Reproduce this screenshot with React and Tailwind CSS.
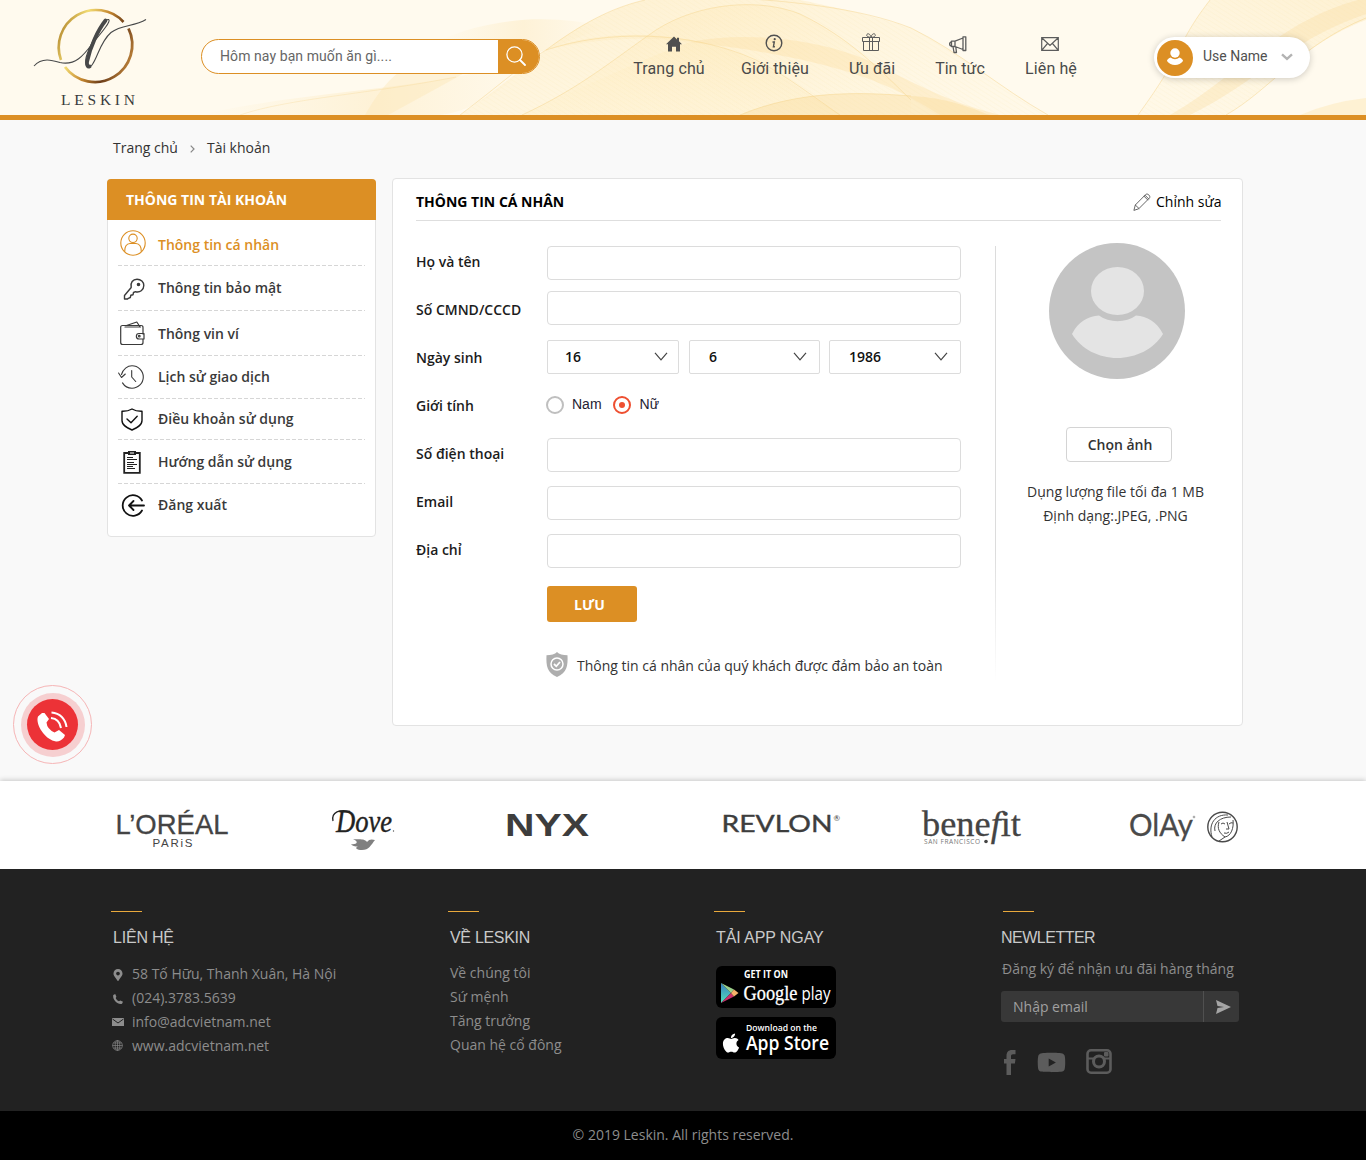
import React from "react";
import { FaApple, FaYoutube, FaPhoneAlt, FaMapMarkerAlt } from "react-icons/fa";

const line = { fill: "none", stroke: "currentColor", strokeLinecap: "round", strokeLinejoin: "round" };

function Waves() {
  return (
    <svg className="absolute inset-0" width="1366" height="115" viewBox="0 0 1366 115" fill="none" aria-hidden="true">
      <defs>
        <linearGradient id="wa" x1="0" y1="0" x2="1" y2="1">
          <stop offset="0" stopColor="#fde6b0" stopOpacity=".5" />
          <stop offset="1" stopColor="#fff6dd" stopOpacity=".3" />
        </linearGradient>
        <linearGradient id="wb" x1="0" y1="1" x2="1" y2="0">
          <stop offset="0" stopColor="#fff3d2" stopOpacity=".2" />
          <stop offset="1" stopColor="#fce3a8" stopOpacity=".4" />
        </linearGradient>
        <linearGradient id="wc" x1="0" y1="0" x2="1" y2="0">
          <stop offset="0" stopColor="#fce6b4" stopOpacity="0" />
          <stop offset=".5" stopColor="#fce6b4" stopOpacity=".4" />
          <stop offset="1" stopColor="#fce6b4" stopOpacity="0" />
        </linearGradient>
        <pattern id="wp" width="4" height="4" patternUnits="userSpaceOnUse" patternTransform="rotate(32)">
          <path d="M0 0H4" stroke="#f5d48c" strokeOpacity=".2" strokeWidth=".8" />
        </pattern>
      </defs>
      <path d="M200 115C280 96 370 92 456 77C490 70 520 62 546 50C510 84 480 110 440 115Z" fill="url(#wc)" />
      <path d="M365 115Q382 85 398 73L470 70Q425 95 388 115Z" fill="#fce6b4" fillOpacity=".4" />
      <path d="M440 40C500 14 560 16 606 27L546 50L470 74Z" fill="url(#wc)" />
      <path d="M460 115C500 88 520 70 546 50C575 28 610 8 645 0H800C850 10 880 18 911 28C960 52 1000 88 1048 115Z" fill="url(#wa)" />
      <path d="M522 115C580 88 610 62 656 30C700 2 760 -2 800 14C850 38 880 70 911 100V115Z" fill="url(#wa)" />
      <path d="M546 50C600 28 680 30 740 54C780 72 810 95 840 115H522C580 88 640 60 690 42C640 36 600 38 546 50Z" fill="url(#wb)" />
      <path d="M460 115C500 88 520 70 546 50C575 28 610 8 645 0H800C850 10 880 18 911 28C960 52 1000 88 1048 115Z" fill="url(#wp)" />
      <path d="M740 115C800 90 860 92 911 96C950 98 970 108 990 115Z" fill="#fbdc9a" fillOpacity=".4" />
      <path d="M690 42C750 30 830 40 880 66C930 92 960 105 1000 115H940C900 90 850 60 690 42Z" fill="#fbdb97" fillOpacity=".3" />
      <g stroke="#f6d58f" strokeOpacity=".5">
        <path d="M460 115C500 85 520 66 546 50C580 25 610 8 645 0" />
        <path d="M522 115C580 88 610 62 656 30C700 2 760 -2 800 14C850 38 880 70 911 100" />
        <path d="M700 -4C790 0 860 8 911 28C960 52 1000 88 1048 115" />
        <path d="M546 50C606 30 690 30 756 60C790 78 815 98 840 115" />
        <path d="M740 115C800 90 860 92 911 96" />
        <path d="M240 115C290 98 370 94 456 77" strokeOpacity=".3" />
      </g>
      <path d="M1138 115C1160 85 1175 60 1186 36C1196 18 1204 8 1210 0H1366V20C1300 45 1270 90 1226 115Z" fill="url(#wb)" />
      <path d="M1138 115C1160 85 1175 60 1186 36C1196 18 1204 8 1210 0H1366V20C1300 45 1270 90 1226 115Z" fill="url(#wp)" />
      <path d="M1170 115C1240 75 1280 18 1366 -2V14C1290 40 1260 80 1190 115Z" fill="#f9dca0" fillOpacity=".35" />
      <path d="M1300 115Q1330 102 1366 98V115Z" fill="#fdebc2" fillOpacity=".6" />
      <g stroke="#f6d58f" strokeOpacity=".5">
        <path d="M1138 115C1160 85 1175 60 1186 36C1196 18 1204 8 1210 0" />
        <path d="M1226 115C1270 90 1300 45 1366 18" />
      </g>
    </svg>
  );
}

function Logo() {
  return (
    <svg width="114" height="100" viewBox="33 7 114 100" fill="none" className="shrink-0 overflow-visible">
      <defs>
        <linearGradient id="gold" x1="58" y1="30" x2="134" y2="62" gradientUnits="userSpaceOnUse">
          <stop offset="0" stopColor="#b3882f" />
          <stop offset=".25" stopColor="#f3dd74" />
          <stop offset=".5" stopColor="#c4862f" />
          <stop offset=".72" stopColor="#6b3c18" />
          <stop offset="1" stopColor="#c68a3e" />
        </linearGradient>
      </defs>
      <path d="M61 60A37.3 37.3 0 0 1 123.500 22" stroke="url(#gold)" strokeWidth="2.6" />
      <path d="M128.500 28.500A37.300 37.300 0 0 1 65 67" stroke="url(#gold)" strokeWidth="2.8" />
      <path d="M34 66C42 57 52 60 60 62.500C75 66 84 55 92 44C103 31 111.500 20.500 108.500 19.500C103 18 95 35 87.500 53C83 65 88 71 92 65C98 57 100 42 111 32.500C122 24 134 27 146 19.500" stroke="#474849" strokeWidth="1.100" />
      <path d="M105.500 20.500C98 30 90 47 87 62C86.800 66 88 67 89.500 66.500" stroke="#474849" strokeWidth="3.800" strokeLinecap="round" />
      <text x="61" y="105" fontFamily="'Liberation Serif', serif" fontSize="15.500" fill="#3a3b3c" textLength="74" lengthAdjust="spacing">LESKIN</text>
    </svg>
  );
}

const Home = () => (
  <svg width="16" height="16" viewBox="0 0 16 16" fill="#505050"><path d="M8 .5L0 8.200h2v7.300h4v-4.700h4v4.700h4V8.200h2l-3-2.900V1.800h-2v1.600z" /></svg>
);
const Info = () => (
  <svg width="18" height="18" viewBox="0 0 18 18" fill="none" stroke="#505050">
    <circle cx="9" cy="9" r="7.800" strokeWidth="1.400" />
    <circle cx="9.700" cy="5.200" r="1.100" fill="#505050" stroke="none" />
    <path d="M7.500 8h1.800L8.400 12.700h1.500" strokeWidth="1.400" />
  </svg>
);
const Gift = () => (
  <svg width="18" height="18" viewBox="0 0 18 18" fill="none" stroke="#5c5c5c">
    <path d="M.5 4.500h17v4H.5zM1.500 8.500h15v9h-15zM7.500 4.500h3v13h-3zM9 4.500C5 4 4 2.500 5 1.300S8.500 1 9 4.500c.5-3.500 3-4.500 4-3.200S13 4 9 4.500z" />
  </svg>
);
const Horn = () => (
  <svg width="19" height="18" viewBox="0 0 19 18" {...line} stroke="#5c5c5c" strokeWidth="1.300">
    <path d="M15 .8h2.800v13.700H15zM15 2L7 5.200H3.500v5.300H7l8 3M7 5.200v5.300M3.500 6C1 6 1 9.800 3.500 9.800M5 10.500l1 6h2.500l-.7-5.500" />
  </svg>
);
const Mail = () => (
  <svg width="18" height="14" viewBox="0 0 18 14" fill="none" stroke="#5c5c5c" strokeWidth="1.200">
    <path d="M.7.700h16.600v12.600H.7zM.7.700L9 8.500 17.300.700M.7 13.300L6.500 6.500M17.300 13.300L11.500 6.500" />
  </svg>
);

const NAV = [
  { t: "Trang chủ", I: Home, box: "w-[72px] tracking-[0.1px]", icon: "pl-[11px] pb-px -translate-x-px" },
  { t: "Giới thiệu", I: Info, box: "w-[68px] ml-9 tracking-[0.1px]", icon: "pb-px pr-[3px]" },
  { t: "Ưu đãi", I: Gift, box: "w-[46px] ml-10", icon: "pb-0.5 pr-[3px]" },
  { t: "Tin tức", I: Horn, box: "w-[50px] ml-10", icon: "pr-[6px] translate-y-px" },
  { t: "Liên hệ", I: Mail, box: "w-[52px] ml-10 tracking-[0.1px]", icon: "pr-[3px] pb-0.5" },
];

const IUser = () => (
  <svg width="26" height="26" viewBox="0 0 26 26" {...line} strokeWidth="1.100">
    <circle cx="13" cy="13" r="12.200" /><circle cx="13" cy="8.300" r="4.200" />
    <path d="M4.700 21.500C4.500 17 6.500 13.500 10 13.500h6c3.500 0 5.500 3.500 5.300 8" />
  </svg>
);
const IKey = () => (
  <svg width="22" height="22" viewBox="0 0 22 22" {...line} strokeWidth="1.400">
    <path d="M8.200 9.500C7 4.500 10 1.200 14 1.200c4 0 6.800 3 6.800 6.300 0 4.500-4 7.300-8.300 6.200l-2 .8-.5 2.300-2.200.5-.5 2.200-2 .8-.7.700H1.500v-3.500z" />
    <circle cx="15.500" cy="6.500" r="1.100" fill="currentColor" />
  </svg>
);
const IWallet = () => (
  <svg width="25" height="25" viewBox="0 0 25 25" {...line} strokeWidth="1.200">
    <path d="M23 13V6.500c0-1.300-.7-2-2-2H2.500c-1 0-1.800.5-1.800 1.500v15.500c0 1.300.7 2 2 2H21c1.300 0 2-.7 2-2V18M5 6h15.500M6.500 4.500L16.800 1l3 4.500M24 12.500h-5c-3.500 0-3.500 5.500 0 5.500h5z" />
    <circle cx="19.300" cy="15.200" r=".8" />
  </svg>
);
const IClock = () => (
  <svg width="26" height="24" viewBox="0 0 26 24" {...line} strokeWidth="1.100">
    <path d="M3.500 9.500C5 4 9.500.8 14 .8 20.200.8 25.300 5.800 25.300 12S20.200 23.200 14 23.200c-4.300 0-7.500-2-9.500-5.300M.6 8l2.900 4.500L7.300 9M13.700 5.500V12l4 4.500" />
  </svg>
);
const IShield = () => (
  <svg width="22" height="23" viewBox="0 0 22 23" {...line} strokeWidth="1.400">
    <path d="M11 1C8 2.800 4.500 3.400 1 3.300v9.200c0 5 5.500 7.500 10 9.500 4.500-2 10-4.500 10-9.500V3.300C17.500 3.400 14 2.800 11 1zM6 11l4 3.800 6.200-6.600" />
  </svg>
);
const IClip = () => (
  <svg width="18" height="23" viewBox="0 0 18 23" fill="none" stroke="currentColor">
    <path d="M1.200 2v19.800h15.600V2z" strokeWidth="1.800" /><path d="M5 0h8v4H5z" fill="currentColor" stroke="none" />
    <path d="M4 6.500h6M4 8.500h10M4 11.500h7M4 13.500h10M4 15.500h6M4 17.500h8" />
    <path d="M7 2h4" stroke="#fff" />
  </svg>
);
const IExit = () => (
  <svg width="25" height="23" viewBox="0 0 25 23" {...line} strokeWidth="1.800">
    <path d="M22 6.500A10.300 10.300 0 1 0 22 16.500M24 11.500H9M13.500 7L9 11.500l4.500 4.500" />
  </svg>
);

const MENU = [
  { t: "Thông tin cá nhân", I: IUser, c: "h-[46px] pt-[15px] text-[#dc8f24]", i: "-mt-[5px] ml-[1.5px] w-[26px]", r: true },
  { t: "Thông tin bảo mật", I: IKey, c: "h-[45px] pt-3 text-[#3a3a3a]", i: "ml-[4.5px] w-[22px]", r: true },
  { t: "Thông vin ví", I: IWallet, c: "h-[45px] pt-[13px] text-[#3a3a3a]", i: "-mt-[3px] ml-[2px] w-[25px]", r: true },
  { t: "Lịch sử giao dịch", I: IClock, c: "h-[43px] pt-[11px] text-[#3a3a3a]", i: "-mt-[2px] -ml-[0.5px] w-[26px]", r: true },
  { t: "Điều khoản sử dụng", I: IShield, c: "h-[41px] pt-[10px] text-[#3a3a3a]", i: "-mt-[1px] ml-[3px] w-[22px] text-[#111]", r: true },
  { t: "Hướng dẫn sử dụng", I: IClip, c: "h-[44px] pt-3 text-[#3a3a3a]", i: "-mt-[1px] ml-[5px] w-[18px] text-[#222]", r: true },
  { t: "Đăng xuất", I: IExit, c: "h-[44px] pt-[11px] text-[#3a3a3a]", i: "-mt-[1px] ml-[2px] w-[25px] text-[#111]", r: false },
];

function Sidebar() {
  return (
    <aside className="h-[358px] w-[269px] rounded-[4px] border border-[#e3e3e3] bg-white">
      <h2 className="-mx-px -mt-px h-[41px] rounded-t-[4px] bg-[#dc8f24] pl-[19px] text-sm font-bold leading-[42px] text-white">THÔNG TIN TÀI KHOẢN</h2>
      <ul className="mx-[10px]">
        {MENU.map(({ t, I, c, i, r }) => (
          <li key={t} className={"flex flex-col justify-between " + c}>
            <div className="flex h-5 items-start">
              <div className="flex w-10 shrink-0"><div className={i}><I /></div></div>
              <span className="whitespace-nowrap text-sm font-semibold leading-5">{t}</span>
            </div>
            {r && <div className="h-px bg-[repeating-linear-gradient(90deg,#d6d6d6_0_4px,transparent_4px_6px)]" />}
          </li>
        ))}
      </ul>
    </aside>
  );
}

function Label({ children }) {
  return <label className="w-[131px] shrink-0 whitespace-nowrap text-sm font-semibold text-[#1c1c1c]">{children}</label>;
}
function Field({ label, box }) {
  return (
    <div className="flex h-12 items-center">
      <Label>{label}</Label>
      <input className={"h-[34px] w-[414px] rounded-[4px] border border-[#dcdcdc] bg-white px-3 text-sm outline-none " + box} />
    </div>
  );
}
function Pick({ v, c }) {
  return (
    <button type="button" className={"flex h-[34px] items-center justify-between rounded-[2px] border border-[#dcdcdc] bg-white text-sm font-semibold text-[#111] " + c}>
      <span>{v}</span>
      <svg width="14" height="9" viewBox="0 0 14 9" fill="none" stroke="#444" strokeWidth="1.200" className="-mt-[2px]"><path d="M1 .8L7 7.800l6-7" /></svg>
    </button>
  );
}
function Radio({ on, children }) {
  return (
    <label className="flex items-center font-['Liberation_Sans',sans-serif] text-sm leading-[18px] text-[#1e2233]">
      <span className={"flex size-[18px] items-center justify-center rounded-full border-2 " + (on ? "mr-[9px] border-[#ee4f31]" : "mr-2 border-[#bfbfbf]")}>
        {on && <span className="size-[6px] rounded-full bg-[#ee4f31]" />}
      </span>
      <span className="-mt-0.5">{children}</span>
    </label>
  );
}

function Profile() {
  return (
    <main className="h-[548px] w-[851px] rounded-[4px] border border-[#e3e3e3] bg-white pl-[23px] pr-[21px]">
      <div className="flex h-[42px] items-center justify-between border-b border-[#dedede] pt-[5px]">
        <h1 className="text-sm font-bold text-black">THÔNG TIN CÁ NHÂN</h1>
        <button className="-mr-[0.5px] flex items-center gap-[5px] text-sm leading-5 text-black">
          <svg width="18" height="18" viewBox="0 0 18 18" {...line} stroke="#555" strokeWidth=".9">
            <path d="M1 17l1.300-5L12.500 1.700c1-1 2.200-.8 3.300.2 1.200 1.200 1.400 2.400.4 3.400L6 15.500zM2.300 12l3.700 3.500M11 3.200l3.700 3.700M12 2.200l3.700 3.700" />
          </svg>
          Chỉnh sửa
        </button>
      </div>
      <div className="flex">
        <form className="w-[579px] shrink-0 pt-[17px]">
          <Field label="Họ và tên" box="mt-0.5" />
          <Field label="Số CMND/CCCD" box="-mt-1" />
          <div className="flex h-12 items-center">
            <Label>Ngày sinh</Label>
            <div className="-mt-0.5 flex">
              <Pick v="16" c="w-[132px] pl-[17px] pr-[10px]" />
              <Pick v="6" c="ml-[10px] w-[131px] pl-[19px] pr-3" />
              <Pick v="1986" c="ml-[9px] w-[132px] pl-[19px] pr-3" />
            </div>
          </div>
          <div className="flex h-12 items-center">
            <Label>Giới tính</Label>
            <div className="-ml-px -mt-0.5 flex gap-[11px]">
              <Radio>Nam</Radio>
              <Radio on>Nữ</Radio>
            </div>
          </div>
          <Field label="Số điện thoại" box="mt-0.5" />
          <Field label="Email" box="mt-0.5" />
          <Field label="Địa chỉ" box="mt-0.5" />
          <div className="pl-[131px] pt-3">
            <button type="button" className="h-9 w-[90px] rounded-[3px] bg-[#dc8f24] pr-[5px] pt-0.5 text-sm font-bold text-white">LƯU</button>
            <p className="-ml-px mt-8 flex items-center gap-[9px] whitespace-nowrap text-sm leading-5 text-[#333]">
              <svg width="22" height="25" viewBox="0 0 22 25" className="-mt-0.5">
                <path d="M11 0c2 2.500 6 3 10.500 3.200C22 14 21 20.500 11 25 1 20.500 0 14 .5 3.200 5 3 9 2.500 11 0z" fill="#aeaeae" />
                <circle cx="11" cy="12" r="6" fill="none" stroke="#fff" strokeWidth="1.500" />
                <path d="M8 12l2.300 2.300L14 10" fill="none" stroke="#fff" strokeWidth="1.800" />
              </svg>
              Thông tin cá nhân của quý khách được đảm bảo an toàn
            </p>
          </div>
        </form>
        <div className="mt-[25px] h-[436px] w-px shrink-0 bg-[linear-gradient(#dcdcdc_70%,transparent)]" />
        <section className="ml-[10px] flex w-[220px] shrink-0 flex-col items-center pt-[22px] text-sm text-[#333]">
          <svg width="136" height="136" viewBox="0 0 136 136" className="ml-[2px]">
            <circle cx="68" cy="68" r="68" fill="#c4c4c4" />
            <ellipse cx="68.500" cy="48" rx="26.500" ry="24" fill="#e4e4e4" />
            <path d="M23 91C29 79 39 73 50 72.500C60 80 77 80 87 72.500C98 73 108 79 114 91C105 106 87 115 68 115C50 115 32 106 23 91Z" fill="#e4e4e4" />
          </svg>
          <button className="ml-[6px] mt-12 h-[35px] w-[106px] rounded-[4px] border border-[#d4d4d4] pl-0.5 font-semibold">Chọn ảnh</button>
          <p className="-ml-px mt-[18px] whitespace-nowrap text-center leading-6">Dụng lượng file tối đa 1 MB<br />Định dạng:.JPEG, .PNG</p>
        </section>
      </div>
    </main>
  );
}

function Brands() {
  return (
    <section className="flex h-[88px] bg-white pl-[115px] shadow-[0_-1px_5px_rgba(0,0,0,0.2)]">
      <svg width="115" height="42" viewBox="115 808 115 42" className="mt-[27px] overflow-visible" fill="#444" stroke="#444" strokeWidth=".3">
        <text x="115.500" y="833.500" fontFamily="'Liberation Sans', sans-serif" fontSize="28" textLength="113" lengthAdjust="spacingAndGlyphs">L’ORÉAL</text>
        <text x="152.500" y="847" fontFamily="'Liberation Sans', sans-serif" fontSize="11.500" textLength="40" lengthAdjust="spacing" stroke="none">PARiS</text>
      </svg>
      <svg width="64" height="46" viewBox="331 807 64 46" className="ml-[101px] mt-[26px] overflow-visible">
        <text x="336" y="832" fontFamily="'Liberation Serif', serif" fontStyle="italic" fontSize="31" fill="#222" stroke="#222" strokeWidth=".4" textLength="56" lengthAdjust="spacingAndGlyphs">Dove</text>
        <path d="M333 821C331 812 340 809 350 811.500" fill="none" stroke="#222" strokeWidth="1.300" />
        <circle cx="393.500" cy="831" r=".7" fill="#555" />
        <path d="M351 844C356 845 360 842 353 839C358 840 364 838 367 842C369 839 372 839 375 840C371 845 369 850 362 850C357 850 354 848 358 846.500C355 846.500 352 846 351 844Z" fill="#808080" />
      </svg>
      <svg width="83" height="26" viewBox="506 813 83 26" className="ml-[111px] mt-8 overflow-visible">
        <text x="505" y="836" fontFamily="'Liberation Sans', sans-serif" fontSize="31" fontWeight="700" fill="#3d3d3d" textLength="84" lengthAdjust="spacingAndGlyphs">NYX</text>
      </svg>
      <svg width="120" height="26" viewBox="722 810 120 26" className="ml-[133px] mt-[29px] overflow-visible" fill="#3d3d3d">
        <text x="721.500" y="832" fontFamily="Lato, sans-serif" fontSize="24" stroke="#3d3d3d" strokeWidth=".4" textLength="111" lengthAdjust="spacingAndGlyphs">REVLON</text>
        <text x="833.500" y="821" fontFamily="Lato, sans-serif" fontSize="8">®</text>
      </svg>
      <svg width="102" height="38" viewBox="921 808 102 38" className="ml-[79px] mt-[27px] overflow-visible" fill="#444">
        <text x="922" y="836" fontFamily="'Liberation Serif', serif" fontSize="36" stroke="#444" strokeWidth=".3" textLength="99" lengthAdjust="spacingAndGlyphs">bene<tspan fontStyle="italic">f</tspan>it</text>
        <text x="924" y="843.500" fontFamily="'Open Sans', sans-serif" fontSize="6.500" textLength="56" fill="#777">SAN FRANCISCO</text>
        <circle cx="986" cy="841.500" r="1.800" />
      </svg>
      <svg width="110" height="38" viewBox="1129 806 110 38" className="ml-[106px] mt-[25px] overflow-visible" fill="none" stroke="#4a4a4a">
        <text x="1129" y="835.500" fontFamily="Lato, sans-serif" fontSize="31" fill="#4a4a4a" strokeWidth=".3" textLength="64" lengthAdjust="spacingAndGlyphs">OlAy</text>
        <circle cx="1194" cy="817" r=".9" strokeWidth=".5" />
        <circle cx="1222.500" cy="827" r="14.700" strokeWidth="1.400" />
        <path d="M1212 837C1208 824 1215 814 1228 815M1219 822C1217 828 1219 833 1225 837L1219 841M1215 831C1213 823 1220 817 1231 817M1225 837C1231 836 1234 828 1233 820M1227 822L1229 829H1226M1224 833Q1227 834 1229 832M1221 824Q1223 822 1225 824M1229 824Q1231 822 1233 823" strokeWidth="1" />
      </svg>
    </section>
  );
}

function Column({ title, className, bar, head = "", children }) {
  return (
    <div className={className}>
      <div className={"h-px w-[31px] bg-[#e9a93c] " + bar} />
      <h3 className={"mt-4 whitespace-nowrap font-['Liberation_Sans',sans-serif] text-base leading-5 text-[#c9c9c9] " + head}>{title}</h3>
      {children}
    </div>
  );
}

function GooglePlay() {
  return (
    <svg width="120" height="42" viewBox="0 0 120 42" className="rounded-[6px] bg-black" fill="#fff">
      <defs>
        <linearGradient id="gp" x1="0" y1="0" x2="0" y2="1"><stop offset="0" stopColor="#3a7fc0" /><stop offset="1" stopColor="#51e0b8" /></linearGradient>
      </defs>
      <path d="M5 17v20l10-10z" fill="url(#gp)" /><path d="M5 17l10 10 3-3.500z" fill="#9ad08b" />
      <path d="M5 37l10-10 3 3.500z" fill="#c9306b" /><path d="M15 27l3-3.500 4.500 3.500-4.500 3.500z" fill="#f6b26b" />
      <text x="28" y="11.500" fontFamily="'Open Sans', sans-serif" fontSize="10" fontWeight="700" textLength="44" lengthAdjust="spacingAndGlyphs">GET IT ON</text>
      <text x="27.500" y="34" fontFamily="'Liberation Serif', serif" fontSize="21" stroke="#fff" strokeWidth=".3" textLength="54" lengthAdjust="spacingAndGlyphs">Google</text>
      <text x="85.500" y="34" fontFamily="'Open Sans', sans-serif" fontWeight="400" fontSize="18" textLength="29" lengthAdjust="spacingAndGlyphs">play</text>
    </svg>
  );
}
function AppStore() {
  return (
    <div className="mt-[9px] flex h-[42px] w-[120px] items-center rounded-[6px] bg-black pl-[4px]">
      <FaApple className="mt-2.5 size-[22px] text-white" />
      <svg width="90" height="42" viewBox="26 0 90 42" fill="#fff" className="overflow-visible">
        <text x="30" y="13.500" fontFamily="'Open Sans', sans-serif" fontSize="9.500" fontWeight="600" textLength="71" lengthAdjust="spacingAndGlyphs">Download on the</text>
        <text x="30" y="33" fontFamily="'Open Sans', sans-serif" fontWeight="600" fontSize="19" textLength="83" lengthAdjust="spacingAndGlyphs">App Store</text>
      </svg>
    </div>
  );
}

const CONTACT = [
  ["58 Tố Hữu, Thanh Xuân, Hà Nội", <FaMapMarkerAlt className="mt-px size-[12px]" />],
  ["(024).3783.5639", <svg width="10" height="10" viewBox="0 0 10 10" fill="currentColor" className="ml-px mt-px"><path d="M.3 1L2.200 0 3.400 2.700 2.700 4C3.200 5.500 4.500 6.800 6 7.300L7.300 6.600 10 7.800 9 9.700C4.500 11 -.8 5.500.3 1Z" /></svg>],
  ["info@adcvietnam.net", <svg width="12" height="8" viewBox="0 0 12 8"><path d="M0 0h12v8H0z" fill="currentColor" /><path d="M.5 1L6 5l5.500-4" fill="none" stroke="#222" /></svg>],
  ["www.adcvietnam.net", <svg width="11" height="11" viewBox="0 0 12 12" fill="none" stroke="currentColor" strokeWidth=".7" className="-mt-px"><circle cx="6" cy="6" r="5.300" /><ellipse cx="6" cy="6" rx="2.500" ry="5.300" /><path d="M6 .5v11M.5 6h11M1.500 3.300h9M1.500 8.700h9" /></svg>],
];

function Footer() {
  return (
    <footer>
      <div className="flex h-[242px] bg-[#222] pl-[113px] pt-[42px] text-sm text-[#8d8d8d]">
        <Column title="LIÊN HỆ" className="w-[337px]" bar="-ml-[2px]" head="tracking-[-0.2px]">
          <ul className="mt-[14px] leading-6">
            {CONTACT.map(([t, icon]) => (
              <li key={t} className="flex items-center"><span className="-ml-px flex w-5">{icon}</span>{t}</li>
            ))}
          </ul>
        </Column>
        <Column title="VỀ LESKIN" className="w-[266px]" bar="-ml-[2px]" head="tracking-[-0.3px]">
          <ul className="mt-[13px] leading-6">
            <li>Về chúng tôi</li><li>Sứ mệnh</li><li>Tăng trưởng</li><li>Quan hệ cổ đông</li>
          </ul>
        </Column>
        <Column title="TẢI APP NGAY" className="w-[285px]" bar="-ml-[2px]" head="tracking-[-0.1px]">
          <div className="mt-[18px]"><GooglePlay /><AppStore /></div>
        </Column>
        <Column title="NEWLETTER" className="w-[240px]" bar="ml-[2px]" head="tracking-[-0.5px]">
          <p className="ml-px mt-[9px] whitespace-nowrap leading-6">Đăng ký để nhận ưu đãi hàng tháng</p>
          <div className="mt-[10px] flex h-[31px] w-[238px] items-center rounded-[3px] bg-[#383838]">
            <span className="flex-1 pl-3 text-[#a0a0a0]">Nhập email</span>
            <button className="flex h-full w-9 items-center justify-center border-l border-[#505050] pl-1">
              <svg width="15" height="14" viewBox="0 0 15 14" fill="#a5a5a5"><path d="M0 0l15 7-15 7 1.500-6L8 7 1.500 6z" /></svg>
            </button>
          </div>
          <div className="mt-[26px] flex items-center text-[#5c5c5c]">
            <svg width="12" height="25" viewBox="0 0 12 25" fill="currentColor" className="ml-[3px]"><path d="M2.500 25V13.500H0V9h2.500V6C2.500 2 4.500 0 8 0h3.500v4.300H9C7.500 4.300 7 5 7 6.500V9h4.500l-.6 4.500H7V25z" /></svg>
            <FaYoutube className="ml-[21px] size-[29px]" />
            <svg width="26" height="25" viewBox="0 0 26 25" fill="none" stroke="currentColor" className="-mt-0.5 ml-5">
              <rect x="1.500" y="1.300" width="23" height="22.400" rx="3.500" strokeWidth="2.600" />
              <circle cx="13" cy="12.500" r="5.500" strokeWidth="3" />
              <path d="M2 9.500h6M18 9.500h6" strokeWidth="2" />
              <rect x="18" y="3" width="4.500" height="4.500" rx="1" fill="currentColor" stroke="none" />
            </svg>
          </div>
        </Column>
      </div>
      <div className="h-[49px] bg-black text-center text-sm leading-[47px] text-[#8d8d8d]">© 2019 Leskin. All rights reserved.</div>
    </footer>
  );
}

export default function App() {
  return (
    <div className="w-[1366px] overflow-hidden bg-[#f9f9f9] font-['Open_Sans',sans-serif]">
      <header className="relative h-[120px] overflow-hidden border-b-[5px] border-[#dc8f24] bg-[#fffaee]">
        <Waves />
        <div className="relative flex pl-[33px] font-['Roboto',sans-serif]">
          <div className="mt-[7px]"><Logo /></div>
          <div className="ml-[54px] mt-[39px] flex h-[35px] w-[339px] overflow-hidden rounded-full border border-[#dc8f24] bg-white">
            <span className="flex-1 pl-[18px] text-sm leading-[33px] tracking-[0.08px] text-[#666]">Hôm nay bạn muốn ăn gì....</span>
            <button className="flex w-[41px] items-center bg-[#dc8f24] pb-0.5 pl-[8px]">
              <svg width="20" height="20" viewBox="0 0 20 20" {...line} stroke="#fff" strokeWidth="1.300"><circle cx="8.500" cy="8.500" r="7.600" /><path d="M14 14l5 5" strokeWidth="1.800" /></svg>
            </button>
          </div>
          <nav className="ml-[93px] mt-[33px] flex">
            {NAV.map(({ t, I, box, icon }) => (
              <a key={t} className={"flex flex-col items-center " + box}>
                <span className={"flex h-[20px] items-end " + icon}><I /></span>
                <span className="mt-[6px] whitespace-nowrap text-base leading-5 text-[#4a4a4a]">{t}</span>
              </a>
            ))}
          </nav>
          <div className="ml-[77px] mt-[37px] flex h-[41px] w-[156px] items-center rounded-full bg-white pl-[3px] shadow-[0_1px_7px_rgba(0,0,0,0.2)]">
            <span className="flex size-9 items-center justify-center rounded-full bg-[#dc8f24]">
              <svg width="16" height="17" viewBox="0 0 16 17" fill="#fff" className="-mt-[3px]"><circle cx="8" cy="5" r="4.700" /><path d="M3.500 9.500Q8 13 12.500 9.500Q16 11 16 13Q13 17 8 17T0 13Q0 11 3.500 9.500Z" /></svg>
            </span>
            <span className="-mt-[3px] ml-[10px] text-sm text-[#505050]">Use Name</span>
            <svg width="12" height="8" viewBox="0 0 12 8" className="-mt-[2px] ml-[13px]" fill="none" stroke="#b3b3b3" strokeWidth="2.400"><path d="M1 1.300l5 4.500 5-4.500" /></svg>
          </div>
        </div>
      </header>

      <div className="h-[661px]">
        <div className="flex h-[58px] items-center pl-[113px] text-sm leading-5 text-[#333]">
          <span className="-mt-0.5">Trang chủ</span>
          <svg width="5" height="8" viewBox="0 0 5 8" className="mx-3" fill="none" stroke="#888" strokeWidth="1.200"><path d="M.7.700L4 4 .7 7.300" /></svg>
          <span className="-mt-0.5">Tài khoản</span>
        </div>
        <div className="flex pl-[107px]">
          <div className="mt-px"><Sidebar /></div>
          <div className="ml-4"><Profile /></div>
        </div>
      </div>

      <a className="absolute left-[13px] top-[685px] flex size-[79px] items-center justify-center rounded-full border border-[#f6b5b6]">
        <span className="flex size-[64px] items-center justify-center rounded-full bg-[#f6cfd0]">
          <span className="flex size-[51px] items-center justify-center rounded-full bg-[#ec3237]">
            <svg width="32" height="32" viewBox="0 0 32 32" fill="none" className="-ml-0.5 mt-0.5">
              <path d="M6 3L2 6.500C-1 14 9 30 20 31.500Q24 32 28 27.500L29 25L23 20L18.500 22.500Q11 19 10.500 12.500L13 9L8.500 3Z" fill="#fff" />
              <path d="M15 8C20 8.500 24 12 25 18M15.500 2.500C24 3 29.500 9 30.500 17" stroke="#fff" strokeWidth="2" />
            </svg>
          </span>
        </span>
      </a>
      <Brands />
      <Footer />
    </div>
  );
}
